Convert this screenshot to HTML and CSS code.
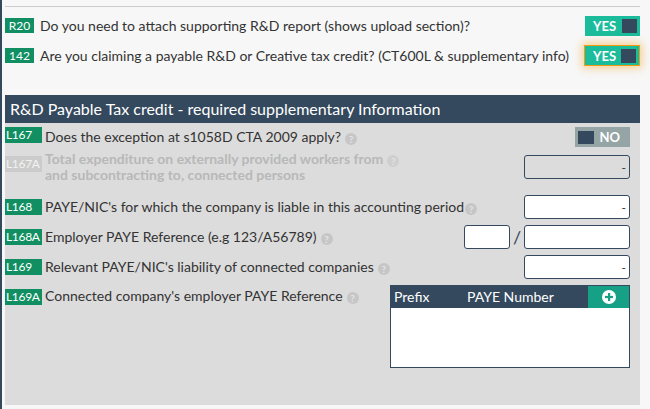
FILE: index.html
```html
<!DOCTYPE html>
<html>
<head>
<meta charset="utf-8">
<link rel="stylesheet" href="styles.css">
</head>
<body>
<div class="page">
  <div class="topline"></div>

  <div class="q-row first">
    <span class="code code-top">R20</span>
    <span class="q-text">Do you need to attach supporting R&amp;D report (shows upload section)?</span>
    <span class="toggle on"><span class="toggle-label">YES</span><span class="knob"></span></span>
  </div>
  <div class="q-row second">
    <span class="code code-top">142</span>
    <span class="q-text">Are you claiming a payable R&amp;D or Creative tax credit? (CT600L &amp; supplementary info)</span>
    <span class="toggle on focused"><span class="toggle-label">YES</span><span class="knob"></span></span>
  </div>

  <section class="panel">
    <h2 class="panel-head">R&amp;D Payable Tax credit - required supplementary Information</h2>
    <div class="panel-body">
      <div class="row r167">
        <span class="code">L167</span>
        <span class="label">Does the exception at s1058D CTA 2009 apply?<span class="help">?</span></span>
        <span class="toggle off"><span class="knob"></span><span class="toggle-label">NO</span></span>
      </div>

      <div class="row r167a">
        <span class="code disabled">L167A</span>
        <span class="label disabled-text">Total expenditure on externally provided workers from<span class="help light">?</span><br>and subcontracting to, connected persons</span>
        <span class="field disabled-field">-</span>
      </div>

      <div class="row">
        <span class="code">L168</span>
        <span class="label">PAYE/NIC's for which the company is liable in this accounting period<span class="help tight">?</span></span>
        <span class="field">-</span>
      </div>

      <div class="row">
        <span class="code">L168A</span>
        <span class="label">Employer PAYE Reference (e.g 123/A56789)<span class="help">?</span></span>
        <span class="field small"></span>
        <span class="slash">/</span>
        <span class="field"></span>
      </div>

      <div class="row">
        <span class="code">L169</span>
        <span class="label">Relevant PAYE/NIC's liability of connected companies<span class="help">?</span></span>
        <span class="field">-</span>
      </div>

      <div class="row top">
        <span class="code">L169A</span>
        <span class="label">Connected company's employer PAYE Reference<span class="help">?</span></span>
        <div class="table">
          <div class="table-head">
            <span class="th prefix">Prefix</span>
            <span class="th number">PAYE Number</span>
            <span class="th add">
              <svg width="14" height="14" viewBox="0 0 14 14"><circle cx="7" cy="7" r="7" fill="#ffffff"/><rect x="6" y="3" width="2.2" height="8" fill="#16a085"/><rect x="3" y="5.9" width="8" height="2.2" fill="#16a085"/></svg>
            </span>
          </div>
          <div class="table-body"></div>
        </div>
      </div>
    </div>
  </section>
</div>
</body>
</html>
```

FILE: styles.css
```css
* { box-sizing: border-box; }

html, body {
  margin: 0;
  padding: 0;
  background: #f7f7f7;
}

body {
  font-family: Lato, "Open Sans", sans-serif;
  color: #333333;
  width: 650px;
  height: 409px;
  overflow: hidden;
}

.page {
  border-left: 2px solid #34495e;
  height: 409px;
  padding: 0 10px 0 3px;
}

.topline {
  height: 7px;
  border-bottom: 1px solid #cccccc;
}

.q-row {
  display: flex;
  align-items: center;
  height: 21px;
  font-size: 14px;
}
.q-row.first { margin-top: 8px; }
.q-row.second { margin-top: 9px; }

.code {
  display: inline-block;
  background: #118f63;
  color: #ffffff;
  font-size: 12px;
  line-height: 16px;
  height: 16px;
  width: 37px;
  padding-left: 1px;
  letter-spacing: -0.3px;
  white-space: nowrap;
  overflow: hidden;
  flex: none;
}
.code-top {
  width: 29px;
  height: 15px;
  line-height: 15px;
  padding-left: 0;
  letter-spacing: 0;
  text-align: center;
}
.code.disabled {
  background: #cbcbcb;
  color: #f2f2f2;
}

.q-text {
  margin-left: 6px;
  flex: 1;
  white-space: nowrap;
}

.toggle {
  display: flex;
  align-items: center;
  justify-content: space-between;
  width: 55px;
  height: 20px;
  font-size: 13px;
  font-weight: bold;
  color: #ffffff;
  flex: none;
}
.toggle.on {
  background: #1abc9c;
  padding: 0 3px 0 8px;
}
.toggle.on .knob {
  width: 15px;
  height: 14px;
  background: #34495e;
}
.toggle.focused {
  height: 21px;
  width: 56px;
  border: 1px solid #f39c12;
  box-shadow: 0 0 8px 2px rgba(243, 156, 18, 0.45);
}
.toggle.off {
  background: #95a5a6;
  padding: 0 10px 0 3px;
}
.toggle.off .knob {
  width: 16px;
  height: 13px;
  background: #34495e;
}

.panel {
  margin-top: 29px;
}

.panel-head {
  margin: 0;
  background: #34495e;
  color: #ffffff;
  font-size: 16px;
  font-weight: normal;
  height: 28px;
  line-height: 28px;
  padding-left: 5px;
}

.panel-body {
  background: #dcdcdc;
  height: 282px;
  padding: 4px 10px 0 0;
}

.row {
  display: flex;
  align-items: center;
  min-height: 24px;
  margin-bottom: 6px;
  font-size: 14px;
}
.row.r167 {
  min-height: 20px;
  margin-bottom: 4px;
}
.row.r167 .code { align-self: flex-start; }
.row.r167a {
  align-items: flex-start;
  margin-bottom: 12px;
}
.row.r167a .code { margin-top: 5px; }
.row.r167a .field { margin-top: 4px; }
.row.top { align-items: flex-start; }
.row.top .code { margin-top: 4px; }
.row.top .label { margin-top: 3px; }

.label {
  flex: 1;
  margin-left: 3px;
  line-height: 16px;
  white-space: nowrap;
}
.disabled-text {
  color: #b8b8b8;
  font-weight: bold;
}

.help {
  display: inline-block;
  width: 12px;
  height: 12px;
  border-radius: 50%;
  background: #c6c6c6;
  color: #e4e4e4;
  font-size: 10px;
  font-weight: bold;
  line-height: 12px;
  text-align: center;
  margin-left: 4px;
  vertical-align: -1px;
}
.help.tight { margin-left: 1px; }
.help.light { background: #cfcfcf; }

.field {
  display: flex;
  align-items: center;
  justify-content: flex-end;
  width: 106px;
  height: 24px;
  background: #ffffff;
  border: 1px solid #34495e;
  border-radius: 3px;
  padding-right: 3px;
  font-size: 12px;
  color: #333333;
  flex: none;
}
.field.small { width: 46px; }
.disabled-field { background: #dcdcdc; }

.slash {
  width: 14px;
  text-align: center;
  font-size: 18px;
  color: #34495e;
  flex: none;
}

.table {
  width: 240px;
  height: 83px;
  border: 1px solid #34495e;
  background: #ffffff;
  flex: none;
}
.table-head {
  display: flex;
  height: 22px;
  background: #34495e;
  color: #ffffff;
  font-size: 14px;
  line-height: 22px;
}
.th.prefix { width: 76px; padding-left: 3px; }
.th.number { flex: 1; }
.th.add {
  width: 41px;
  background: #16a085;
  display: flex;
  align-items: center;
  justify-content: center;
}
```
